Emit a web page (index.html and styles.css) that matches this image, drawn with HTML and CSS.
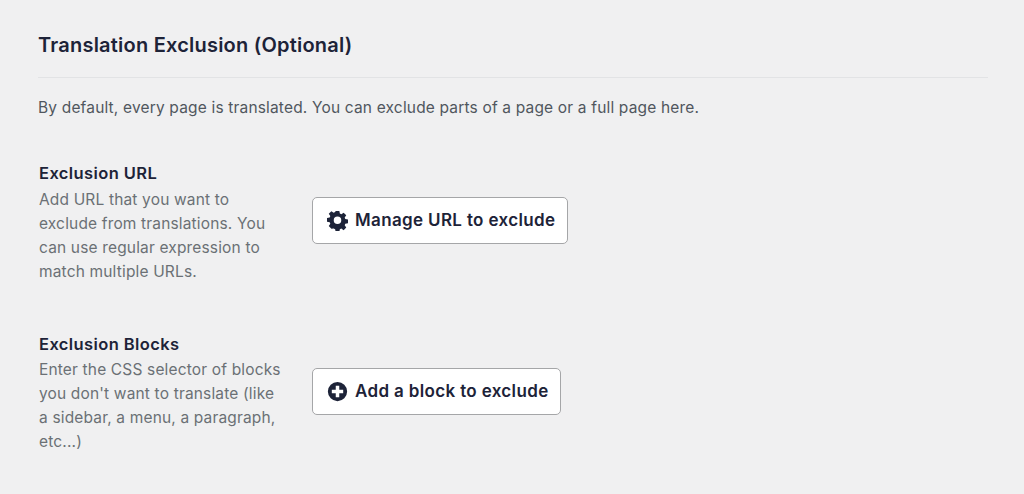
FILE: index.html
```html
<!DOCTYPE html>
<html lang="en">
<head>
    <meta charset="UTF-8">
    <meta name="viewport" content="width=device-width, initial-scale=1.0">
    <title>Translation Exclusion</title>
    <link rel="stylesheet" href="styles.css">
</head>
<body>
    <div class="container">
        <h2 class="section-title">Translation Exclusion (Optional)</h2>
        <p class="intro">By default, every page is translated. You can exclude parts of a page or a full page here.</p>

        <div class="row row-url">
            <div class="info">
                <h3>Exclusion URL</h3>
                <p>Add URL that you want to exclude from translations. You can use regular expression to match multiple URLs.</p>
            </div>
            <button type="button" class="btn">
                <svg class="icon" viewBox="0 0 24 24">
                    <path fill-rule="evenodd" d="M9.900 1h4.200l.6 3.100 1.700.7 2.600-1.800 3 3-1.800 2.600.7 1.700 3.100.6v4.200l-3.100.6-.7 1.700 1.800 2.600-3 3-2.600-1.800-1.700.7-.6 3.100H9.900l-.6-3.100-1.700-.7L5 21.300l-3-3 1.800-2.600-.7-1.700L0 13.400V9.200l3.100-.6.7-1.700L2 4.300l3-3 2.600 1.800 1.700-.7z M12 7.500a4.300 4.300 0 1 0 0 8.600a4.300 4.300 0 0 0 0-8.600z"/>
                </svg>
                Manage URL to exclude
            </button>
        </div>

        <div class="row row-blocks">
            <div class="info">
                <h3>Exclusion Blocks</h3>
                <p>Enter the CSS selector of blocks you don't want to translate (like a sidebar, a menu, a paragraph, etc...)</p>
            </div>
            <button type="button" class="btn">
                <svg class="icon" viewBox="0 0 24 24">
                    <path fill-rule="evenodd" d="M12 1a11 11 0 1 0 0 22a11 11 0 0 0 0-22z M10 5.500h4v4.500h4.500v4H14v4.500h-4V14H5.500v-4H10z"/>
                </svg>
                Add a block to exclude
            </button>
        </div>
    </div>
</body>
</html>
```

FILE: styles.css
```css
body {
    font-family: Inter, "Liberation Sans", sans-serif;
    margin: 0;
    padding: 0;
    background-color: #f0f0f1;
    color: #50575e;
}
.container {
    width: 950px;
    margin-left: 38px;
    height: 494px;
    overflow: hidden;
}
.section-title {
    margin: 0;
    padding: 33px 0 19px;
    height: 25px;
    line-height: 25px;
    font-size: 20px;
    font-weight: 600;
    letter-spacing: 0.22px;
    color: #1d2338;
    border-bottom: 1px solid #e2e3e5;
}
.intro {
    margin: 19px 0 0;
    font-size: 15.5px;
    letter-spacing: 0.17px;
    line-height: 22px;
}
.row {
    display: flex;
    align-items: center;
    gap: 28px;
}
.row-url {
    margin-top: 43px;
}
.row-blocks {
    margin-top: 48px;
}
.info {
    width: 245px;
    margin-left: 1px;
}
.info h3 {
    margin: 0 0 4px;
    font-size: 16.5px;
    font-weight: 600;
    letter-spacing: 0.4px;
    line-height: 22px;
    color: #1d2338;
}
.info p {
    margin: 0;
    font-size: 15.5px;
    letter-spacing: 0.16px;
    line-height: 24px;
    color: #6b7075;
}
.row-blocks h3 {
    margin: 1px 0 3px;
}
.btn {
    display: flex;
    align-items: center;
    gap: 7px;
    height: 47px;
    margin-bottom: 6px;
    padding: 0 12px 0 14px;
    font-family: inherit;
    font-size: 17px;
    font-weight: 600;
    letter-spacing: 0.35px;
    color: #1d2338;
    background: white;
    border: 1px solid #a5a6a8;
    border-radius: 5px;
}
.row-blocks .btn {
    margin-bottom: 4px;
    padding-right: 11px;
}
.icon {
    width: 21px;
    height: 21px;
    fill: #1d2338;
}
```
